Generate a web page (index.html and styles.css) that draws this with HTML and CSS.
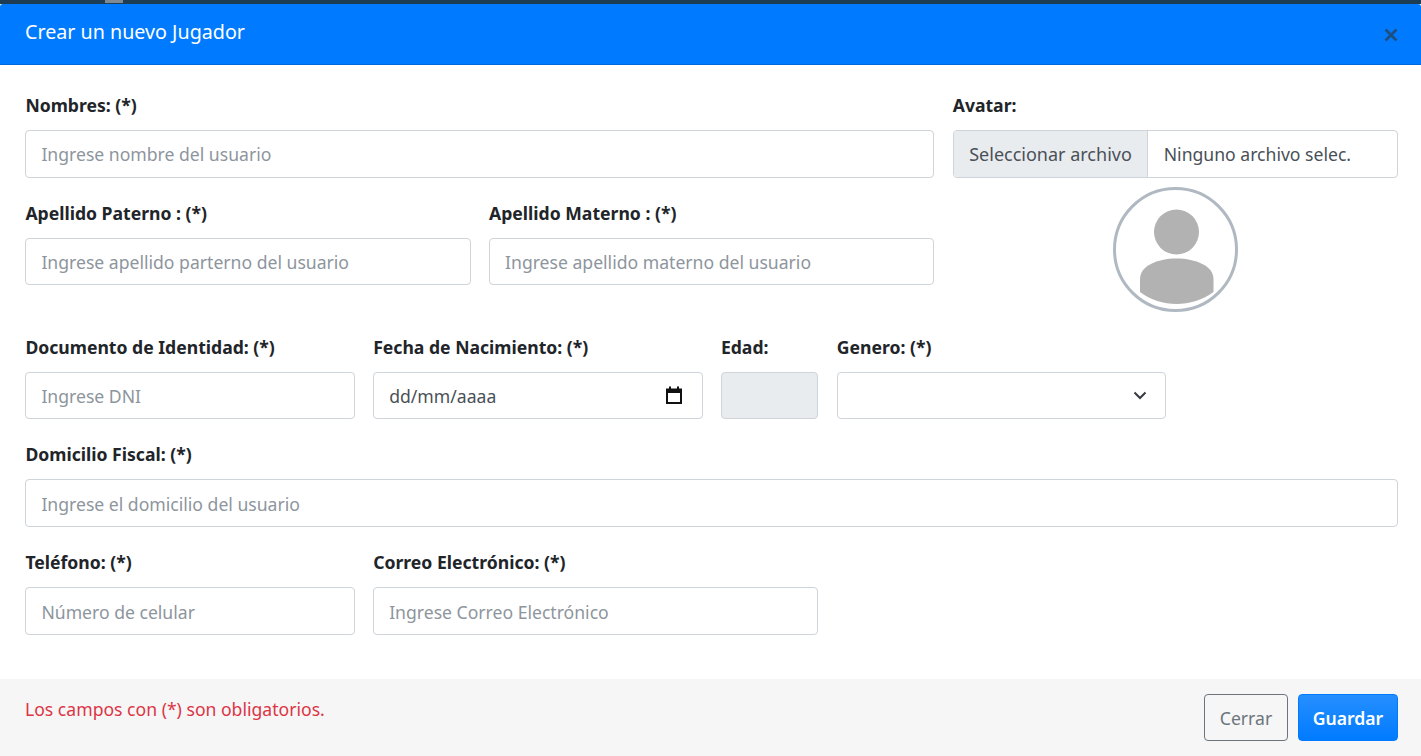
FILE: index.html
```html
<!DOCTYPE html>
<html lang="en">
<head>
  <meta charset="UTF-8">
  <meta name="viewport" content="width=device-width, initial-scale=1.0">
  <title>Crear un nuevo Jugador</title>
  <link rel="stylesheet" href="styles.css">
</head>
<body>

<div class="backdrop-strip"><span class="strip-mark"></span></div>

<div class="modal-header">
  <h4 class="modal-title">Crear un nuevo Jugador</h4>
  <svg class="close-icon" width="14" height="14" viewBox="0 0 14 14" aria-label="Cerrar">
    <path d="M1.5 1.5 L12.5 12.5 M12.5 1.5 L1.5 12.5" stroke="#1c4f80" stroke-width="2.8" fill="none"/>
  </svg>
</div>

<form class="modal-body">
  <div class="top-row">
    <div class="top-left">
      <div class="field span-2">
        <label>Nombres: (*)</label>
        <input class="form-control first" type="text" placeholder="Ingrese nombre del usuario">
      </div>
      <div class="field">
        <label>Apellido Paterno : (*)</label>
        <input class="form-control" type="text" placeholder="Ingrese apellido parterno del usuario">
      </div>
      <div class="field">
        <label>Apellido Materno : (*)</label>
        <input class="form-control" type="text" placeholder="Ingrese apellido materno del usuario">
      </div>
    </div>
    <div class="top-right">
      <label>Avatar:</label>
      <div class="file-control">
        <span class="file-button">Seleccionar archivo</span>
        <span class="file-name">Ninguno archivo selec.</span>
      </div>
      <svg class="avatar" width="125" height="125" viewBox="0 0 125 125">
        <defs>
          <clipPath id="avatar-clip"><circle cx="62.5" cy="62.5" r="60.5"/></clipPath>
        </defs>
        <circle cx="63.5" cy="45" r="22.5" fill="#b2b2b2"/>
        <path d="M27 105 V92 C27 79 44 71.5 63.5 71.5 C83 71.5 100.5 79 100.5 92 V105 C90 113 76 117 63.5 117 C51 117 37 113 27 105 Z" fill="#b2b2b2" clip-path="url(#avatar-clip)"/>
        <circle cx="62.5" cy="62.5" r="61" fill="none" stroke="#b0b9c1" stroke-width="3"/>
      </svg>
    </div>
  </div>

  <div class="form-row">
    <div class="field col-3">
      <label>Documento de Identidad: (*)</label>
      <input class="form-control" type="text" placeholder="Ingrese DNI">
    </div>
    <div class="field col-3">
      <label>Fecha de Nacimiento: (*)</label>
      <div class="form-control date-control">
        <span>dd/mm/aaaa</span>
        <svg width="18" height="20" viewBox="0 0 18 20">
          <path d="M2 4.5 H16 V18 H2 Z" stroke="#111" stroke-width="2" fill="none"/>
          <path d="M2 6.5 H16" stroke="#111" stroke-width="3" fill="none"/>
          <path d="M5 1.5 V4 M13 1.5 V4" stroke="#111" stroke-width="2" fill="none"/>
        </svg>
      </div>
    </div>
    <div class="field col-1">
      <label>Edad:</label>
      <input class="form-control is-readonly" type="text" readonly>
    </div>
    <div class="field col-3">
      <label>Genero: (*)</label>
      <div class="form-control select-control">
        <svg width="16" height="16" viewBox="0 0 16 16">
          <path d="M2.5 5.5 L8 11 L13.5 5.5" stroke="#343a40" stroke-width="2" fill="none"/>
        </svg>
      </div>
    </div>
  </div>

  <div class="form-row">
    <div class="field col-12">
      <label>Domicilio Fiscal: (*)</label>
      <input class="form-control tall" type="text" placeholder="Ingrese el domicilio del usuario">
    </div>
  </div>

  <div class="form-row last-row">
    <div class="field col-3">
      <label>Teléfono: (*)</label>
      <input class="form-control" type="text" placeholder="Número de celular">
    </div>
    <div class="field col-4">
      <label>Correo Electrónico: (*)</label>
      <input class="form-control" type="text" placeholder="Ingrese Correo Electrónico">
    </div>
  </div>
</form>

<div class="modal-footer">
  <p class="required-note">Los campos con (*) son obligatorios.</p>
  <div class="footer-buttons">
    <button class="btn btn-close" type="button">Cerrar</button>
    <button class="btn btn-save" type="button">Guardar</button>
  </div>
</div>

</body>
</html>
```

FILE: styles.css
```css
* {
  box-sizing: border-box;
}
html, body {
  height: 100%;
}
body {
  margin: 0;
  display: flex;
  flex-direction: column;
  overflow: hidden;
  background: #fff;
  font-family: "Noto Sans", Lato, sans-serif;
  font-size: 17.6px;
  line-height: 1.5;
  color: #212529;
}

/* dark page edge above the modal */
.backdrop-strip {
  flex: none;
  height: 4px;
  background: #1d3d55;
  padding-left: 105px;
}
.strip-mark {
  display: block;
  width: 18px;
  height: 3px;
  background: #7f8a92;
}

.modal-header {
  flex: none;
  height: 61px;
  padding: 0 23px 5px 25px;
  display: flex;
  align-items: center;
  justify-content: space-between;
  background: #007bff;
  border-bottom: 1px solid #0069d9;
  border-top-left-radius: 3px;
  border-top-right-radius: 3px;
}
.modal-title {
  margin: 0;
  font-size: 19.7px;
  font-weight: 400;
  color: #fff;
}
.close-icon {
  margin-top: 7px;
}

.modal-body {
  flex: 1;
  padding: 31px 23px 0 25.4px;
}
label {
  display: block;
  height: 26px;
  margin-bottom: 8px;
  font-weight: 700;
  line-height: 18px;
}

.form-row,
.top-row,
.top-left {
  display: grid;
  column-gap: 18.4px;
}
.form-row,
.top-row {
  grid-template-columns: repeat(12, 1fr);
}
.top-left {
  grid-column: span 8;
  grid-template-columns: 1fr 1fr;
  align-content: start;
}
.top-right {
  grid-column: span 4;
}
.span-2 {
  grid-column: span 2;
}
.col-1 {
  grid-column: span 1;
}
.col-3 {
  grid-column: span 3;
}
.col-4 {
  grid-column: span 4;
}
.col-12 {
  grid-column: span 12;
}
.field {
  margin-bottom: 26px;
}
.last-row .field {
  margin-bottom: 44.5px;
}

.form-control {
  display: block;
  width: 100%;
  height: 47.5px;
  padding: 8px 15px 6px;
  border: 1px solid #ced4da;
  border-radius: 4px;
  background: #fff;
  font-family: inherit;
  font-size: 17.6px;
  color: #495057;
}
.form-control.first {
  padding-top: 6px;
}
.form-control.tall {
  height: 48px;
}
.form-control::placeholder {
  color: #8d959d;
  opacity: 1;
}
.is-readonly {
  background: #e9ecef;
}
.date-control,
.select-control {
  display: flex;
  align-items: center;
  justify-content: space-between;
}
.date-control {
  padding-right: 19px;
}
.date-control svg {
  margin-top: -2px;
}
.select-control {
  justify-content: flex-end;
  padding-right: 17px;
}
.select-control svg {
  margin-top: -2px;
}

.file-control {
  display: flex;
  height: 48px;
  border: 1px solid #ced4da;
  border-radius: 4px;
  overflow: hidden;
  color: #495057;
}
.file-button {
  display: flex;
  align-items: center;
  width: 194px;
  padding-left: 15.5px;
  background: #e9ecef;
  border-right: 1px solid #ced4da;
  font-size: 18px;
}
.file-name {
  display: flex;
  align-items: center;
  padding-left: 16px;
}
.avatar {
  display: block;
  margin: 9px auto 25.5px;
}

.modal-footer {
  flex: none;
  height: 77px;
  padding: 15px 23px 0 25px;
  display: flex;
  justify-content: space-between;
  background: #f6f6f6;
}
.required-note {
  margin: 2px 0 0;
  color: #dc3545;
}
.footer-buttons {
  display: flex;
  gap: 10px;
}
.btn {
  height: 47px;
  padding: 0;
  border-radius: 4px;
  font-family: inherit;
  font-size: 17.6px;
}
.btn-close {
  width: 84px;
  border: 1px solid #6c757d;
  background: transparent;
  color: #6c757d;
}
.btn-save {
  width: 100px;
  border: 1px solid #007bff;
  background: linear-gradient(#268fff, #007bff);
  color: #fff;
  font-weight: 600;
}
```
